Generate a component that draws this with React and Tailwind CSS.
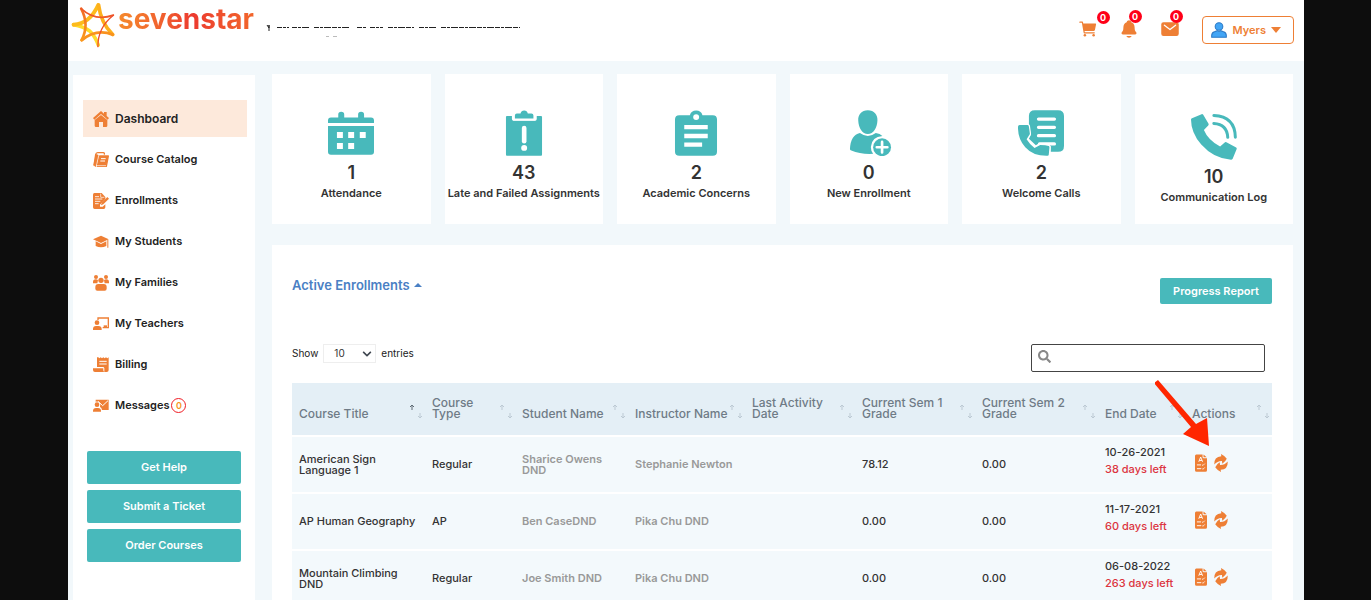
import React from "react";
import { IoCart, IoMail, IoNotifications } from "react-icons/io5";
import { FaChevronDown, FaSearch } from "react-icons/fa";

/* ---------- brand ---------- */

function StarMark() {
  return (
    <svg viewBox="32 6 132 140" className="h-[46px] w-11 shrink-0" fill="none" strokeLinecap="round" strokeLinejoin="round" aria-hidden="true">
      <defs>
        <linearGradient id="star-warm" x1="0" y1="0" x2="0" y2="1">
          <stop offset="0" stopColor="#f26a25" />
          <stop offset="1" stopColor="#fb9a1b" />
        </linearGradient>
      </defs>
      <path d="M39 75Q68 80 88 94Q106 112 114 137" stroke="#fedb2c" strokeWidth="11" />
      <path d="M39 75Q88 72 114 15" stroke="#fdbb1c" strokeWidth="12" />
      <path d="M115 15Q122 70 158 105" stroke="#fdb01c" strokeWidth="11" />
      <path d="M158 105Q108 86 64 122" stroke="#f9921e" strokeWidth="9" />
      <path d="M63 122Q88 76 62 26" stroke="url(#star-warm)" strokeWidth="8" />
      <path d="M62 26Q105 66 160 46" stroke="#ef5a28" strokeWidth="5" />
      <path d="M160 46Q112 84 113 142" stroke="#ee4e2b" strokeWidth="4" />
    </svg>
  );
}

/* ---------- sidebar icons ---------- */

const navSvg = "size-4 shrink-0 text-[#ee7f35]";

const HomeIcon = () => (
  <svg viewBox="71 61 48 48" className={navSvg} fill="currentColor" aria-hidden="true">
    <path d="M71 82 95 61l9 8v-5h8v12l7 6-4 5-20-17-20 17z" />
    <path d="M76 88 95 73l19 15v17q0 4-4 4h-9V94H89v15h-9q-4 0-4-4z" />
  </svg>
);
const CatalogIcon = () => (
  <svg viewBox="71 183 48 48" className={navSvg} fill="none" stroke="currentColor" aria-hidden="true">
    <path d="M74 224l5-33q1-6 6-6h17q4 0 3 6" strokeWidth="4" />
    <path d="M80 190l-7 32 6 6 8-36z" fill="currentColor" strokeWidth="1" />
    <path d="M91 195h26l-6 31H84z" fill="currentColor" strokeWidth="4" strokeLinejoin="round" />
    <path d="M95 203h14M93 210h14" stroke="#fff" strokeWidth="3" />
    <path d="M80 224h30" stroke="#fff" strokeWidth="2" />
  </svg>
);
const EnrollIcon = () => (
  <svg viewBox="71 306 48 48" className={navSvg} fill="currentColor" aria-hidden="true">
    <path d="M75 306h22l11 12v6L92 341v6h8l8-7v9q0 5-5 5H76q-5 0-5-5v-38q0-5 4-5z" />
    <path d="M77 317h12M77 324h22M77 331h16M77 338h11" stroke="#fff" strokeWidth="2.5" />
    <path d="M94 308v11h11" stroke="#fff" strokeWidth="2" fill="none" />
    <path d="m95 343 2-8 17-17 5 5-17 17z" />
  </svg>
);
const CapIcon = () => (
  <svg viewBox="71 428 48 48" className={navSvg} fill="currentColor" aria-hidden="true">
    <path d="m71 444 24-11 23 11-23 11z" />
    <path d="M79 450l16 8 16-8v14q-16 8-32 0z" />
    <path d="M114 445h3v24h-3z" />
  </svg>
);
const FamilyIcon = () => (
  <svg viewBox="71 41 48 48" className={navSvg} fill="currentColor" aria-hidden="true">
    <circle cx="80" cy="47" r="6" />
    <circle cx="110" cy="47" r="6" />
    <path d="M71 66v-4q0-8 8-8 5 0 7 3l-2 9zM119 66v-4q0-8-8-8-5 0-7 3l2 9z" />
    <circle cx="95" cy="57" r="8" />
    <path d="M78 82v-5q0-9 9-9h16q9 0 9 9v5q0 6-6 6H84q-6 0-6-6z" />
  </svg>
);
const TeacherIcon = () => (
  <svg viewBox="71 162 48 48" className={navSvg} fill="currentColor" aria-hidden="true">
    <path d="M86 174v-6h31v29h-17" fill="none" stroke="currentColor" strokeWidth="4" />
    <path d="M103 190h10v5h-10z" />
    <circle cx="83" cy="182" r="7" />
    <path d="M71 204v-3q0-9 9-9h7q10 0 10 9v3z" />
  </svg>
);
const BillingIcon = () => (
  <svg viewBox="71 284 48 48" className={navSvg} fill="currentColor" aria-hidden="true">
    <path d="M83 285h4l3 3 4-3 4 3 4-3 4 3 4-3 4 3 4-3v38q0 6-6 6h-7V318q0-4-5-4H83z" />
    <path d="M90 297h22M90 305h22" stroke="#fff" strokeWidth="3" />
    <path d="M71 318h31v6q0 5 5 5H77q-6 0-6-6z" />
  </svg>
);
const MessagesIcon = () => (
  <svg viewBox="71 407 48 48" className={navSvg} fill="currentColor" aria-hidden="true">
    <path d="M79 412h39v31H98q-1-7-6-9 4-8-2-14-5-4-11-2z" />
    <path d="m86 417 14 13 16-15" fill="none" stroke="#fff" strokeWidth="3" />
    <circle cx="83" cy="427" r="7" />
    <path d="M71 448v-2q0-9 9-9h6q9 0 9 9v2z" />
  </svg>
);

/* ---------- stat card icons ---------- */

const statSvg = "size-[46px] text-[#48b9bb]";

const CalendarIcon = () => (
  <svg viewBox="189 135 139 138" className={statSvg} fill="currentColor" aria-hidden="true">
    <path d="M189 174v-8q0-9 9-9h22v-9q0-8 9-8t9 8v9h42v-9q0-8 9-8t9 8v9h21q9 0 9 9v8z" />
    <path fillRule="evenodd" d="M189 183h139v78q0 9-9 9H198q-9 0-9-9zm27 18v18h18v-18zm34 0v18h18v-18zm35 0v18h18v-18zm-69 33v18h18v-18zm34 0v18h18v-18z" />
  </svg>
);
const AlertClipboardIcon = () => (
  <svg viewBox="708 135 139 138" className={statSvg} fill="currentColor" aria-hidden="true">
    <path d="M726 153h15v9q0 5 5 5h65q5 0 5-5v-9h13q3 0 3 3v114q0 3-3 3H726q-3 0-3-3V156q0-3 3-3z" />
    <path d="M750 160v-9q0-6 6-6h11q2-9 11-9t11 9h11q6 0 6 6v9z" stroke="#fff" strokeWidth="12" paintOrder="stroke" />
    <path d="M778 189v40" stroke="#fff" strokeWidth="14" strokeLinecap="round" />
    <circle cx="778" cy="249" r="9" fill="#fff" />
  </svg>
);
const ClipboardIcon = () => (
  <svg viewBox="206 135 139 138" className={statSvg} fill="currentColor" aria-hidden="true">
    <path d="M225 150h32q4-14 19-14t19 14h31q13 0 13 13v98q0 12-13 12H225q-13 0-13-12v-98q0-13 13-13z" />
    <circle cx="276" cy="156" r="9" fill="#fff" />
    <path d="M240 186h71M240 213h71M240 239h54" stroke="#fff" strokeWidth="13" />
  </svg>
);
const UserPlusIcon = () => (
  <svg viewBox="720 135 139 138" className={statSvg} fill="currentColor" aria-hidden="true">
    <path d="M786 135c19 0 30 13 29 31-1 22-12 41-29 41s-28-19-29-41c-1-18 10-31 29-31z" />
    <path d="M762 204q24 18 48 0 13 2 20 9-32 2-35 33 0 12 7 21-38 2-66-10-4-1-4-5 2-42 30-48z" />
    <circle cx="829" cy="247" r="27" />
    <path d="M829 231v32M813 247h32" stroke="#fff" strokeWidth="8" strokeLinecap="round" />
  </svg>
);
const CallListIcon = () => (
  <svg viewBox="207 135 139 138" className={statSvg} fill="currentColor" aria-hidden="true">
    <path d="M258 135h70q18 0 18 18v90q0 18-18 18h-22v-17q-22-13-37-8l-8 5-21-20 6-12-6-32v-24q0-18 18-18z" />
    <path d="M269 162h48M269 187h48M269 212h48M272 237h45" stroke="#fff" strokeWidth="10" strokeLinecap="round" />
    <path d="M212 180h24q4 0 4 5l3 22-10 16q8 14 24 26l17-9q17 0 26 3 2 1 2 5l-2 21q0 4-4 4-43 1-67-26-23-26-22-62 0-5 5-5z" stroke="#fff" strokeWidth="7" paintOrder="stroke" />
  </svg>
);
const PhoneIcon = () => (
  <svg viewBox="725 147 139 138" className={statSvg} fill="currentColor" aria-hidden="true">
    <path d="m728 159 29-12q3-1 5 2l16 27q1 3-1 5l-13 14q12 30 49 50l13-12q3-3 6-1l28 15q4 2 3 5l-12 30q-2 3-5 3-52-3-90-46-31-36-31-76 0-3 3-4z" />
    <path d="M794 175q40 2 42 42M794 151q64 3 65 66" fill="none" stroke="currentColor" strokeWidth="9" strokeLinecap="round" />
  </svg>
);

/* ---------- small icons ---------- */

const UserAvatarIcon = () => (
  <svg viewBox="0 0 46 46" className="size-4 shrink-0" fill="#42a5f5" stroke="#2b78c5" strokeWidth="3" aria-hidden="true">
    <path d="M2 44V39q0-9 8-11l8-3q5 4 10 0l8 3q8 2 8 11v5z" />
    <circle cx="23" cy="13" r="11" />
  </svg>
);
const ReportIcon = () => (
  <svg viewBox="645 248 38 56" className="h-[18px] w-3" fill="currentColor" aria-hidden="true">
    <path d="M649 249h20v8q0 4 4 4h10v38q0 5-5 5h-28q-5 0-5-5v-45q0-5 4-5z" />
    <path d="M672 249l10 9h-10z" />
    <path d="m657 272 6-15 6 15M659 268h8" fill="none" stroke="#fff" strokeWidth="3" />
    <path d="M651 282h13M651 294h13" stroke="#fff" strokeWidth="3" />
    <path d="m667 281 3 3 6-6M667 293l3 3 6-6" fill="none" stroke="#fff" strokeWidth="2.5" />
  </svg>
);
const RenewIcon = () => (
  <svg viewBox="703 249 44 56" className="h-[18px] w-4" fill="currentColor" aria-hidden="true">
    <path d="M704 282q-1-25 22-26l-1-7q11 5 18 15-4 9-14 15l-1-8q-13-1-24 11z" />
    <path d="M746 272q1 25-22 26l1 7q-11-5-18-15 4-9 14-15l1 8q13 1 24-11z" />
  </svg>
);
const SortArrow = ({ active, down }) => (
  <svg viewBox="0 0 6 6" className={active ? "size-[6px] text-[#5f6b75]" : "size-[6px] text-[#bcc9d3]"} fill="none" stroke="currentColor" strokeWidth="1" aria-hidden="true">
    {down ? <path d="M3 0v5M1 3l2 2 2-2" /> : <path d="M3 6V1M1 3l2-2 2 2" />}
  </svg>
);

/* ---------- data ---------- */

const nav = [
  { label: "Dashboard", Icon: HomeIcon, active: true },
  { label: "Course Catalog", Icon: CatalogIcon },
  { label: "Enrollments", Icon: EnrollIcon },
  { label: "My Students", Icon: CapIcon },
  { label: "My Families", Icon: FamilyIcon },
  { label: "My Teachers", Icon: TeacherIcon },
  { label: "Billing", Icon: BillingIcon },
  { label: "Messages", Icon: MessagesIcon, count: 0 },
];

const stats = [
  { value: 1, label: "Attendance", Icon: CalendarIcon },
  { value: 43, label: "Late and Failed Assignments", Icon: AlertClipboardIcon },
  { value: 2, label: "Academic Concerns", Icon: ClipboardIcon },
  { value: 0, label: "New Enrollment", Icon: UserPlusIcon },
  { value: 2, label: "Welcome Calls", Icon: CallListIcon },
  { value: 10, label: "Communication Log", Icon: PhoneIcon, low: true },
];

const columns = [
  { label: "Course Title", width: "w-[133px]", sorted: true },
  { label: "Course Type", width: "w-[90px]" },
  { label: "Student Name", width: "w-[113px]" },
  { label: "Instructor Name", width: "w-[117px]" },
  { label: "Last Activity Date", width: "w-[110px]" },
  { label: "Current Sem 1 Grade", width: "w-[120px]" },
  { label: "Current Sem 2 Grade", width: "w-[123px]" },
  { label: "End Date", width: "w-[87px]" },
  { label: "Actions", width: "w-[87px]" },
];

const rows = [
  { title: "American Sign Language 1", type: "Regular", student: "Sharice Owens DND", teacher: "Stephanie Newton", sem1: "78.12", sem2: "0.00", end: "10-26-2021", left: "38 days left" },
  { title: "AP Human Geography", type: "AP", student: "Ben CaseDND", teacher: "Pika Chu DND", sem1: "0.00", sem2: "0.00", end: "11-17-2021", left: "60 days left" },
  { title: "Mountain Climbing DND", type: "Regular", student: "Joe Smith DND", teacher: "Pika Chu DND", sem1: "0.00", sem2: "0.00", end: "06-08-2022", left: "263 days left" },
];

const alerts = [
  { name: "Cart", Icon: IoCart, badge: "-top-2 -right-3" },
  { name: "Notifications", Icon: IoNotifications, badge: "-top-[9px] -right-[3px]" },
  { name: "Mail", Icon: IoMail, badge: "-top-[9px] -right-[3px]" },
];

/* ---------- sections ---------- */

function Header() {
  return (
    <header className="flex h-[61px] items-start justify-between bg-white pr-[10px] pl-[3px]">
      <div className="flex items-start">
        <a href="#home" className="flex items-start gap-[3px] pt-[2px]">
          <StarMark />
          <span className="bg-linear-to-r from-[#f58a2c] via-[#ec3a2f] via-55% to-[#f2662b] bg-clip-text text-[28px] leading-[34px] font-bold text-transparent">sevenstar</span>
        </a>
        <svg viewBox="0 0 254 14" className="mt-6 ml-3 h-[14px] w-[254px]" fill="none" stroke="#222" aria-hidden="true">
          <path d="M1 1l2 3M3 4V1v6" />
          <path d="M11 3.5H23M26 3.5h17M48 3.5h36M91 3.5h9M104 3.5h13M122 3.5h26M153 3.5h17M175 3.5h79" strokeDasharray="5 1 3 1 7 1" />
          <path d="M60 12.5h3M67 12.5h4" stroke="#bbb" />
        </svg>
      </div>
      <div className="flex items-start pt-4">
        <div className="flex gap-[21px] pt-[3px] pr-[22px]">
          {alerts.map(({ name, Icon, badge }) => (
            <button key={name} type="button" aria-label={name} className="relative text-[#ee7f35]">
              <Icon className="size-5" />
              <span className={`absolute ${badge} flex size-[13px] items-center justify-center rounded-full bg-[#ff0018] text-[9px] leading-3 font-bold text-white`}>0</span>
            </button>
          ))}
        </div>
        <button type="button" className="flex h-7 items-center rounded border border-[#ee7f35] px-2 text-[#ee7f35]">
          <UserAvatarIcon />
          <span className="ml-[6px] text-[11px] font-semibold">Myers</span>
          <svg viewBox="0 0 10 6" className="mr-1 ml-[5px] h-[6px] w-[10px]" fill="currentColor" aria-hidden="true">
            <path d="M0 0h10L5 6z" />
          </svg>
        </button>
      </div>
    </header>
  );
}

function Sidebar() {
  return (
    <aside className="w-[182px] shrink-0 bg-white pt-[25px]">
      <nav className="flex flex-col gap-1 pr-2 pl-[10px]">
        {nav.map(({ label, Icon, active, count }) => (
          <a
            key={label}
            href="#nav"
            className={
              active
                ? "flex h-[37px] items-center gap-[6px] bg-[#fde9db] pl-[10px] text-xs font-semibold text-[#222]"
                : "flex h-[37px] items-center gap-[6px] pl-[10px] text-[11px] font-semibold text-[#222]"
            }
          >
            <Icon />
            <span>{label}</span>
            {count !== undefined && (
              <span className="-ml-1 flex size-[15px] items-center justify-center rounded-full border border-[#f01c24] text-[9px] text-[#f7941d]">{count}</span>
            )}
          </a>
        ))}
      </nav>
      <div className="mt-[27px] flex flex-col gap-[6px] px-[14px]">
        {["Get Help", "Submit a Ticket", "Order Courses"].map((label) => (
          <button key={label} type="button" className="h-[33px] rounded-xs bg-[#48b9bb] text-[11px] font-semibold text-white">
            {label}
          </button>
        ))}
      </div>
    </aside>
  );
}

function Stats() {
  return (
    <section className="grid grid-cols-6 gap-[14px]">
      {stats.map(({ value, label, Icon, low }) => (
        <article key={label} className={low ? "flex h-[150px] flex-col items-center bg-white pt-10" : "flex h-[150px] flex-col items-center bg-white pt-9"}>
          <Icon />
          <strong className="mt-[5px] text-[18px] leading-6 font-semibold text-[#333]">{value}</strong>
          <span className="text-[11px] leading-4 font-semibold whitespace-nowrap text-[#333]">{label}</span>
        </article>
      ))}
    </section>
  );
}

function EnrollmentsTable() {
  return (
    <table className="w-full table-fixed border-collapse text-left text-[11px] leading-[11px]">
      <thead>
        <tr className="h-[53px] border-b-2 border-white bg-[#e4eff6]">
          {columns.map(({ label, width, sorted }) => (
            <th key={label} scope="col" className={`${width} p-0 align-bottom font-medium text-[#6f7b86]`}>
              <div className="flex items-end justify-between pr-[2px] pb-4 pl-[7px] text-[12px]">
                <span>{label}</span>
                <span className="flex shrink-0 gap-[2px]">
                  <span className="pb-[9px]">
                    <SortArrow active={sorted} />
                  </span>
                  <span className="flex items-end">
                    <SortArrow down />
                  </span>
                </span>
              </div>
            </th>
          ))}
        </tr>
      </thead>
      <tbody className="font-medium text-[#333]">
        {rows.map((row) => (
          <tr key={row.title} className="h-[57px] border-b-2 border-white bg-[#f3f9fc]">
            <td className="py-0 pr-1 pl-[7px]">{row.title}</td>
            <td className="px-[7px] py-0">{row.type}</td>
            <td className="px-[7px] py-0 font-semibold text-[#999]">{row.student}</td>
            <td className="px-[7px] py-0 font-semibold whitespace-nowrap text-[#999]">{row.teacher}</td>
            <td />
            <td className="px-[7px] py-0">{row.sem1}</td>
            <td className="px-[7px] py-0">{row.sem2}</td>
            <td className="px-[7px] pt-0 pb-2 leading-[17px] whitespace-nowrap">
              <div>{row.end}</div>
              <div className="text-[#dc3440]">{row.left}</div>
            </td>
            <td className="pt-0 pb-1 pl-[10px]">
              <div className="flex items-center gap-[6px] text-[#ee7f35]">
                <button type="button" aria-label="Progress report">
                  <ReportIcon />
                </button>
                <button type="button" aria-label="Renew enrollment">
                  <RenewIcon />
                </button>
              </div>
            </td>
          </tr>
        ))}
      </tbody>
    </table>
  );
}

function Enrollments() {
  return (
    <section className="flex-1 bg-white pt-[33px] pr-[21px] pl-5">
      <div className="flex items-start justify-between">
        <h2 className="text-[13px] leading-[14px] font-semibold text-[#4a80c4]">
          <button type="button" className="flex items-center gap-1">
            Active Enrollments
            <svg viewBox="0 0 8 4" className="h-1 w-2" fill="currentColor" aria-hidden="true">
              <path d="M0 4h8L4 0z" />
            </svg>
          </button>
        </h2>
        <button type="button" className="h-[26px] w-28 rounded-xs bg-[#48b9bb] text-[11px] font-semibold text-white">
          Progress Report
        </button>
      </div>
      <div className="mt-10 flex items-start justify-between pr-[7px]">
        <label className="flex items-center gap-[5px] text-[10px] text-[#222]">
          Show
          <span className="relative">
            <select defaultValue="10" className="block h-[19px] w-[53px] appearance-none border border-[#eee] bg-white pl-[10px] text-[10px] text-[#333]">
              <option>10</option>
              <option>25</option>
              <option>50</option>
            </select>
            <FaChevronDown className="pointer-events-none absolute top-[5px] right-1 size-[10px] text-[#3f4650]" />
          </span>
          entries
        </label>
        <div className="relative">
          <FaSearch className="absolute top-[6px] left-[7px] size-[13px] text-[#888]" />
          <input type="search" aria-label="Search enrollments" className="block h-7 w-[234px] rounded-xs border border-[#444] bg-transparent pr-2 pl-6 text-[11px]" />
        </div>
      </div>
      <div className="relative mt-[11px]">
        <EnrollmentsTable />
        <svg viewBox="0 0 56 70" className="pointer-events-none absolute -top-1 right-[61px] h-[70px] w-14" fill="#ff2600" aria-hidden="true">
          <path d="m3 1 38 44 11-6 2 28-26-12 8-7L-1 4z" />
        </svg>
      </div>
    </section>
  );
}

export default function App() {
  return (
    <div className="h-screen overflow-hidden bg-[#0d0d0d] pr-[67px] pl-[68px] font-[Inter,'Open_Sans',sans-serif]">
      <div className="flex h-full flex-col bg-[#f2f8fb]">
        <Header />
        <div className="flex min-h-0 flex-1 gap-[17px] pr-[11px] pl-[5px]">
          <div className="flex pt-[14px]">
            <Sidebar />
          </div>
          <main className="flex min-w-0 flex-1 flex-col gap-[21px] pt-[13px]">
            <Stats />
            <Enrollments />
          </main>
        </div>
      </div>
    </div>
  );
}
